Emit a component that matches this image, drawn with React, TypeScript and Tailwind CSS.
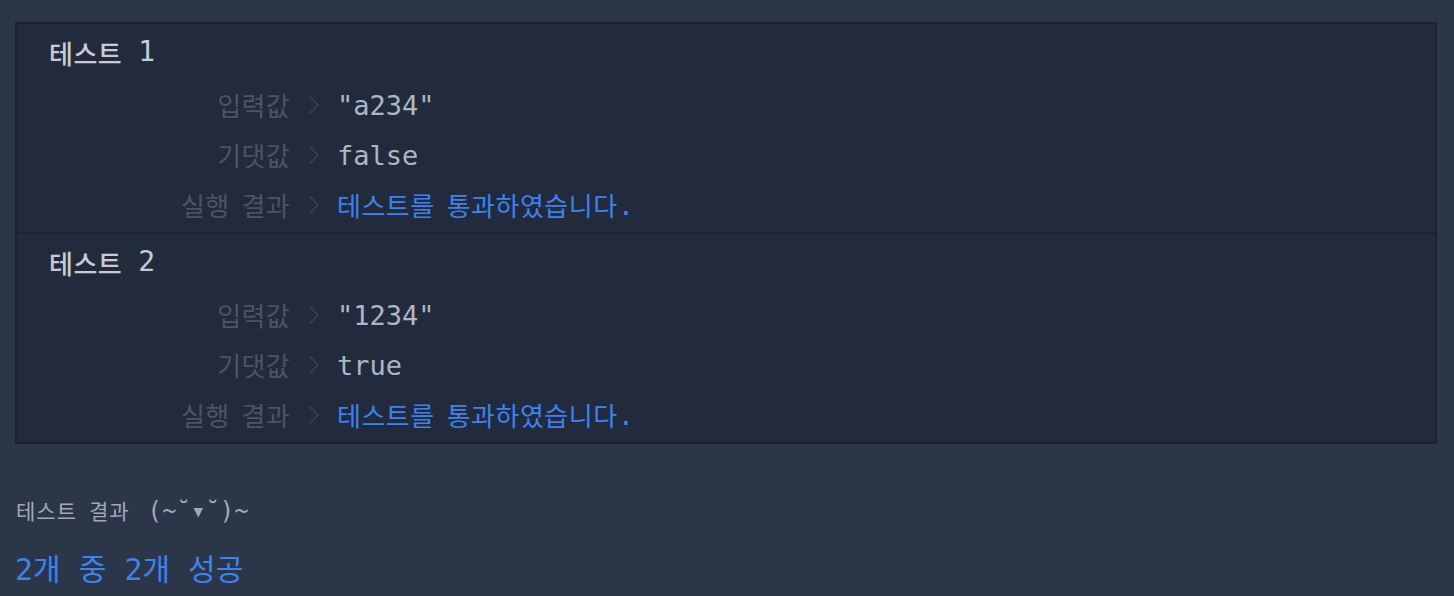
import React from "react";

const mono = "font-['DejaVu_Sans_Mono',monospace]";
const ko = "font-['Noto_Sans_CJK_KR','Noto_Sans',sans-serif]";

interface KoProps {
  children: React.ReactNode;
  className?: string;
}

function Ko({ children, className = "" }: KoProps) {
  return <span className={`${ko} ${className}`}>{children}</span>;
}

function Chevron() {
  return (
    <svg width="12" height="20" viewBox="0 0 12 20" className="shrink-0">
      <polyline
        points="1.5,1.5 10,10 1.5,18.5"
        fill="none"
        stroke="#3a4457"
        strokeWidth="1.4"
      />
    </svg>
  );
}

interface RowProps {
  label: React.ReactNode;
  children: React.ReactNode;
}

function Row({ label, children }: RowProps) {
  return (
    <div className="flex items-center h-[50px]">
      <div className="w-[275px] text-right text-[#4a5466] text-[26px] tracking-[0.3px] leading-none pr-[2px]">
        {label}
      </div>
      <div className="w-[45px] flex pl-[16px]">
        <Chevron />
      </div>
      <div className="flex items-center leading-none">{children}</div>
    </div>
  );
}

interface TestCaseProps {
  index: number;
  input: string;
  expected: string;
  last?: boolean;
}

function PassMessage() {
  return (
    <span className="text-[#3b83f2] flex items-center">
      <Ko className="text-[26px] tracking-[0.5px]">테스트를</Ko>
      <span className="inline-block w-[12px]" />
      <Ko className="text-[26px] tracking-[0.5px]">통과하였습니다</Ko>
      <span className={`${mono} text-[27px]`}>.</span>
    </span>
  );
}

function TestCase({ index, input, expected, last }: TestCaseProps) {
  return (
    <div className={`pt-2 pb-0.5 ${last ? "" : "border-b-2 border-[#1c2230]"}`}>
      <div className="h-10 flex items-center pl-[32px] text-[#c6cbd4]">
        <Ko className="text-[26px] tracking-[0.5px] font-medium">테스트</Ko>
        <span className={`${mono} text-[28px] ml-[16px]`}>{index}</span>
      </div>
      <div className="mt-2">
        <Row label={<Ko>입력값</Ko>}>
          <span className={`${mono} text-[27px] text-[#aeb6c4]`}>{input}</span>
        </Row>
        <Row label={<Ko>기댓값</Ko>}>
          <span className={`${mono} text-[27px] text-[#aeb6c4]`}>{expected}</span>
        </Row>
        <Row
          label={
            <>
              <Ko>실행</Ko>
              <span className="inline-block w-[12px]" />
              <Ko>결과</Ko>
            </>
          }
        >
          <PassMessage />
        </Row>
      </div>
    </div>
  );
}

export default function App() {
  return (
    <div className="w-[1454px] h-[596px] bg-[#2b3648] pt-[22px] overflow-hidden">
      <div className="ml-[15px] w-[1422px] border-2 border-[#1c2230] bg-[#222b3c]">
        <TestCase index={1} input={'"a234"'} expected="false" />
        <TestCase index={2} input={'"1234"'} expected="true" last />
      </div>

      <div className="mt-[51px] pl-[16px] h-8 flex items-center text-[#a1a8b5]">
        <Ko className="text-[21px] tracking-[1px]">테스트</Ko>
        <span className="inline-block w-[12px]" />
        <Ko className="text-[21px] tracking-[1px]">결과</Ko>
        <span className={`${mono} text-[24px] ml-[18px]`}>(~˘▾˘)~</span>
      </div>

      <div className="mt-[22px] pl-[15px] h-10 flex items-center text-[#3b83f2] text-[30px] font-['DejaVu_Sans_Mono','Noto_Sans_CJK_KR',monospace] whitespace-pre">
        2개 중 2개 성공
      </div>
    </div>
  );
}
